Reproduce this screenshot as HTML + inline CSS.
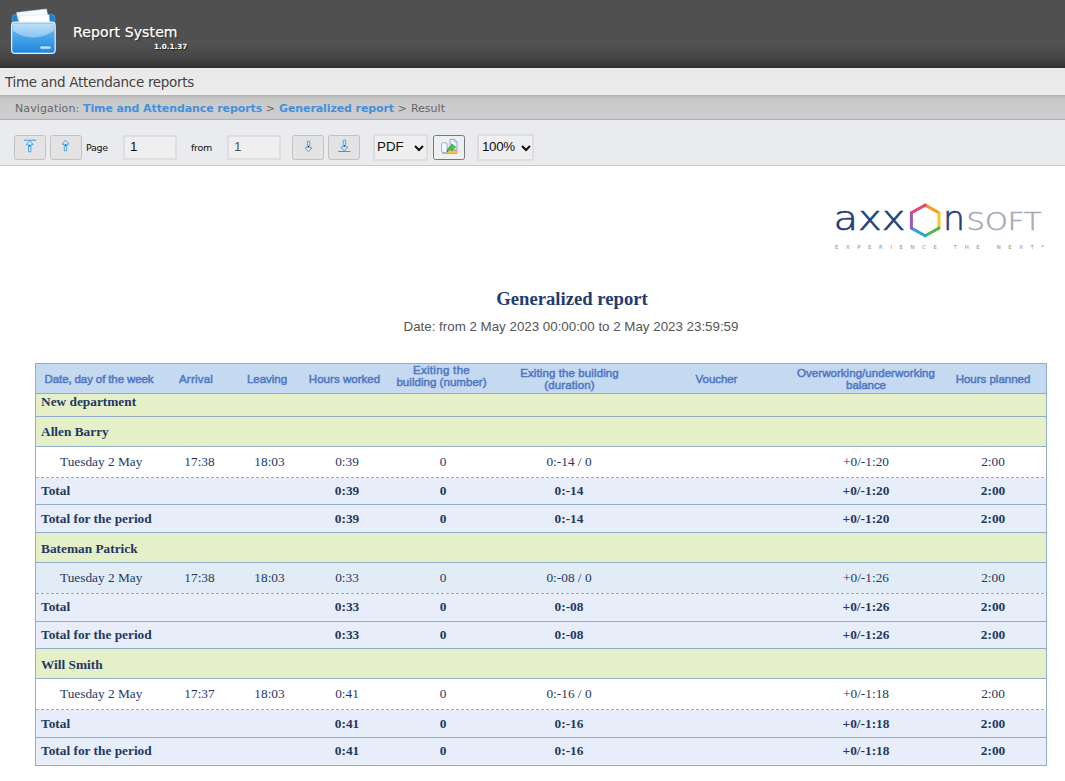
<!DOCTYPE html>
<html lang="en">
<head>
<meta charset="utf-8">
<title>Report System</title>
<style>
html,body{margin:0;padding:0;}
body{width:1065px;height:781px;overflow:hidden;background:#fff;position:relative;font-family:"Liberation Sans",sans-serif;}
.abs{position:absolute;}
#hdr{left:0;top:0;width:1065px;height:68px;background:linear-gradient(#505050 0%,#505050 57%,#525252 63%,#494949 80%,#3a3a3a 94%,#2d2d2d 100%);}
#apptitle{left:73px;top:24px;font-family:"DejaVu Sans","Liberation Sans",sans-serif;font-size:14px;color:#fff;white-space:nowrap;text-shadow:1px 1px 1px #222;letter-spacing:0.12px;-webkit-text-stroke:0.25px #fff;}
#appver{left:154px;top:42px;font-family:"DejaVu Sans","Liberation Sans",sans-serif;font-size:7.2px;font-weight:bold;color:#fff;white-space:nowrap;text-shadow:1px 1px 1px #222;}
#tbar{left:0;top:68px;width:1065px;height:27px;background:linear-gradient(#e8e8e8,#ededed);}
#ttext{left:5px;top:74px;font-family:"DejaVu Sans","Liberation Sans",sans-serif;font-size:13.5px;color:#444;white-space:nowrap;letter-spacing:-0.3px;}
#nav{left:0;top:95px;width:1065px;height:25px;background:linear-gradient(#b2b2b2 0%,#c3c3c3 10%,#cacaca 30%,#cecece 93%,#a6a6a6 100%);}
#navtext{left:15px;top:102px;font-family:"DejaVu Sans","Liberation Sans",sans-serif;font-size:11px;color:#666;white-space:nowrap;}
#navtext b{color:#4490dc;letter-spacing:-0.1px;}
#navtext i{font-style:normal;letter-spacing:0.25px;}
#tool{left:0;top:120px;width:1065px;height:45px;background:#e9ebee;border-bottom:1px solid #c9c9c9;}
.btn{position:absolute;top:135px;height:25px;width:32px;box-sizing:border-box;border:1px solid #c2c2c2;border-radius:2.5px;background:#e3e3e3;}
.inp{position:absolute;top:135px;height:25px;width:54px;box-sizing:border-box;border:2px solid #dedede;background:#efefef;font-size:13.33px;line-height:20px;padding-left:5px;color:#111;}
.sel{position:absolute;top:134px;height:27px;box-sizing:border-box;border:2px solid #dedede;background:#efefef;font-size:13.33px;line-height:21px;padding-left:2px;color:#111;}
.chev{position:absolute;right:2px;top:9px;}
.lbl{position:absolute;font-family:"DejaVu Sans","Liberation Sans",sans-serif;font-size:9.5px;color:#111;top:142px;white-space:nowrap;letter-spacing:-0.3px;}

#rtitle{left:372px;top:288px;width:400px;text-align:center;font-family:"Liberation Serif",serif;font-weight:bold;font-size:18.67px;color:#1f3d73;white-space:nowrap;}
#rdate{left:321px;top:319px;width:500px;text-align:center;font-family:"Liberation Sans",sans-serif;font-size:13.33px;color:#555;white-space:nowrap;}
#tbl{left:35px;top:363px;width:1010px;height:401px;border:1px solid #90aeca;background:#fff;overflow:hidden;}
.row{position:absolute;left:0;width:1010px;}
.head{background:#c5d9f1;}
.dept,.emp{background:#e6f0c8;}
.data{background:#fff;}
.datab{background:#e2ecf6;}
.tot{background:#e8eef9;}
.ln{position:absolute;left:0;width:1010px;height:0;border-top:1px solid #90aeca;}
.ln.dash{border-top:0;height:1px;background:repeating-linear-gradient(90deg,#98a9be 0,#98a9be 3px,transparent 3px,transparent 5px);}
.th{position:absolute;width:200px;text-align:center;font-family:"Liberation Sans",sans-serif;font-size:11.5px;line-height:12.2px;color:#5078c4;white-space:nowrap;-webkit-text-stroke:0.5px #5078c4;}
.tl,.tc{position:absolute;font-family:"Liberation Serif",serif;font-size:13.33px;line-height:20px;height:20px;color:#1f3864;white-space:nowrap;}
.tc{width:120px;text-align:center;}
.b{font-weight:bold;}
</style>
</head>
<body>
<div id="hdr" class="abs"></div>
<svg id="folder" class="abs" style="left:8px;top:6px" width="52" height="52" viewBox="8 6 52 52">
<defs>
<linearGradient id="fg" x1="0" y1="0" x2="0" y2="1"><stop offset="0" stop-color="#8cc6f2"/><stop offset="0.45" stop-color="#4aa6ea"/><stop offset="1" stop-color="#1f86dc"/></linearGradient>
<linearGradient id="gl" x1="0" y1="0" x2="0" y2="1"><stop offset="0" stop-color="#cfe7fa"/><stop offset="1" stop-color="#9fd0f5"/></linearGradient>
<linearGradient id="pp" x1="0" y1="0" x2="0" y2="1"><stop offset="0" stop-color="#ffffff"/><stop offset="1" stop-color="#e4eef6"/></linearGradient>
</defs>
<rect x="12.2" y="14.6" width="42.6" height="12" rx="3" fill="#1d7fcf" stroke="#4aa3e6" stroke-width="0.8"/>
<polygon points="16.5,12.5 46.5,9 48.5,20 18.5,21" fill="url(#pp)" stroke="#d5e3ee" stroke-width="0.5"/>
<polygon points="19,15.5 49,15 49.5,22 19.5,22" fill="#ffffff" stroke="#dbe7f0" stroke-width="0.5"/>
<rect x="11.6" y="22.2" width="43.6" height="31.2" rx="3.5" fill="url(#fg)" stroke="#e6f3fd" stroke-width="1.2"/>
<path d="M13,24.7 Q13,23.7 14,23.7 L52.8,23.7 Q53.8,23.7 53.8,24.7 L53.8,31 Q33.5,44 13,31 Z" fill="url(#gl)" opacity="0.75"/>
<rect x="40" y="46" width="11" height="3.2" rx="1.2" fill="#bfe0f8" stroke="#1a74c4" stroke-width="0.5"/>
</svg>
<div id="apptitle" class="abs">Report System</div>
<div id="appver" class="abs">1.0.1.37</div>
<div id="tbar" class="abs"></div>
<div id="ttext" class="abs">Time and Attendance reports</div>
<div id="nav" class="abs"></div>
<div id="navtext" class="abs"><span style="letter-spacing:0.12px">Navigation: </span><b id="l1">Time and Attendance reports</b><i> &gt; </i><b id="l2">Generalized report</b><i> &gt; </i><span id="l3">Result</span></div>
<div id="tool" class="abs"></div>
<div class="btn" style="left:14px"><svg width="32" height="25" viewBox="0 0 32 25" style="position:absolute;left:-1px;top:-1px"><line x1="10" y1="5.2" x2="22" y2="5.2" stroke="#3a9ce4" stroke-width="1"/><path d="M14.5,16.8 L16.9,16.8 L16.9,9.8 L19.2,9.5 L15.7,5.6000000000000005 L12.2,9.5 L14.5,9.8 Z" fill="#cdeaff" stroke="#3a9ce4" stroke-width="0.85" stroke-linejoin="miter"/><rect x="15.2" y="10.0" width="1" height="1.5" fill="#0a1a2a"/></svg></div>
<div class="btn" style="left:50px"><svg width="32" height="25" viewBox="0 0 32 25" style="position:absolute;left:-1px;top:-1px"><path d="M14.3,15.8 L16.7,15.8 L16.7,9.4 L19.0,9.1 L15.5,5.2 L12.0,9.1 L14.3,9.4 Z" fill="#cdeaff" stroke="#3a9ce4" stroke-width="0.85" stroke-linejoin="miter"/><rect x="15.0" y="9.6" width="1" height="1.5" fill="#0a1a2a"/></svg></div>
<div class="lbl" id="lpage" style="left:86px">Page</div>
<div class="inp" id="in1" style="left:123px">1</div>
<div class="lbl" id="lfrom" style="left:191px">from</div>
<div class="inp" id="in2" style="left:227px;color:#555">1</div>
<div class="btn" style="left:292px"><svg width="32" height="25" viewBox="0 0 32 25" style="position:absolute;left:-1px;top:-1px"><path d="M15.3,6.3 L17.7,6.3 L17.7,12.499999999999998 L20.0,12.799999999999999 L16.5,16.7 L13.0,12.799999999999999 L15.3,12.499999999999998 Z" fill="#cdeaff" stroke="#3a9ce4" stroke-width="0.85" stroke-linejoin="miter"/><rect x="16.0" y="10.799999999999999" width="1" height="1.5" fill="#0a1a2a"/></svg></div>
<div class="btn" style="left:328px"><svg width="32" height="25" viewBox="0 0 32 25" style="position:absolute;left:-1px;top:-1px"><line x1="10" y1="16.5" x2="22.3" y2="16.5" stroke="#3a9ce4" stroke-width="1"/><path d="M15.2,5.2 L17.599999999999998,5.2 L17.599999999999998,11.799999999999999 L19.9,12.1 L16.4,16.0 L12.899999999999999,12.1 L15.2,11.799999999999999 Z" fill="#cdeaff" stroke="#3a9ce4" stroke-width="0.85" stroke-linejoin="miter"/><rect x="15.899999999999999" y="10.1" width="1" height="1.5" fill="#0a1a2a"/></svg></div>
<div class="sel" id="s1" style="left:373px;width:55px">PDF<svg class="chev" width="10" height="7" viewBox="0 0 10 7"><path d="M1,1 L5,5 L9,1" fill="none" stroke="#111" stroke-width="2"/></svg></div>
<div class="btn" style="left:433px;border-color:#777;background:#efefef"><svg width="32" height="25" viewBox="0 0 32 25" style="position:absolute;left:-1px;top:-1px"><g>
<path d="M9.6,15.2 h14.2 v3.2 h-14.2 z" fill="#f3c94b" stroke="#c8921c" stroke-width="0.7"/>
<path d="M17,4.4 h4.6 l2.4,2.4 v8.2 h-7 z" fill="#eef5fc" stroke="#6f9ad0" stroke-width="0.8"/>
<path d="M21.4,4.6 v2.4 h2.4" fill="none" stroke="#6f9ad0" stroke-width="0.6"/>
<rect x="8.6" y="7.8" width="5.4" height="9.6" rx="1" fill="#f4f9fe" stroke="#7f9fc6" stroke-width="0.8"/>
<path d="M14.2,17.2 C14.4,13.4 16.2,11.4 18.6,11.1 L18.6,8.8 L22.6,12.2 L18.6,15.6 L18.6,13.6 C16.8,13.8 15.4,15 14.2,17.2 Z" fill="#52c83f" stroke="#1e8f22" stroke-width="0.7"/>
</g></svg></div>
<div class="sel" id="s2" style="left:477px;width:57px;letter-spacing:-0.3px;padding-left:3px">100%<svg class="chev" style="right:1px" width="10" height="7" viewBox="0 0 10 7"><path d="M1,1 L5,5 L9,1" fill="none" stroke="#111" stroke-width="2"/></svg></div>
<svg id="logo" class="abs" style="left:825px;top:195px" width="230" height="65" viewBox="825 195 230 65">
<g font-family="'DejaVu Sans','Liberation Sans',sans-serif" font-weight="200">
<text x="833.5" y="229.5" font-size="34" fill="#1e3f78" stroke="#1e3f78" stroke-width="0.65" textLength="72" lengthAdjust="spacingAndGlyphs">axx</text>
<text x="943" y="229.5" font-size="34" fill="#1e3f78" stroke="#1e3f78" stroke-width="0.65" textLength="22" lengthAdjust="spacingAndGlyphs">n</text>
<text x="966.5" y="229.5" font-size="25.4" fill="#a6aab8" stroke="#a6aab8" stroke-width="0.6" textLength="75" lengthAdjust="spacingAndGlyphs">SOFT</text>
<text x="835" y="248.7" font-size="5.4" fill="#8c8c8c" font-weight="400" textLength="209" lengthAdjust="spacing">EXPERIENCE  THE  NEXT*</text>
</g>
<line x1="925.2" y1="205.1" x2="939.0" y2="212.8" stroke="#f39a1e" stroke-width="3" stroke-linecap="round"/><line x1="939.0" y1="212.8" x2="939.0" y2="228.1" stroke="#f6c433" stroke-width="3" stroke-linecap="round"/><line x1="939.0" y1="228.1" x2="925.2" y2="235.7" stroke="#55b848" stroke-width="3" stroke-linecap="round"/><line x1="925.2" y1="235.7" x2="911.4" y2="228.1" stroke="#2aa3de" stroke-width="3" stroke-linecap="round"/><line x1="911.4" y1="228.1" x2="911.4" y2="212.8" stroke="#9a5bb7" stroke-width="3" stroke-linecap="round"/><line x1="911.4" y1="212.8" x2="925.2" y2="205.1" stroke="#e4457a" stroke-width="3" stroke-linecap="round"/>
</svg>
<div id="rtitle" class="abs">Generalized report</div>
<div id="rdate" class="abs">Date: from 2 May 2023 00:00:00 to 2 May 2023 23:59:59</div>
<!--TBL-->
<div id="tbl" class="abs">
<div class="row head" style="top:0px;height:29px"></div>
<div class="row dept" style="top:30px;height:22px"></div>
<div class="row emp" style="top:53px;height:29px"></div>
<div class="row data" style="top:83px;height:30px"></div>
<div class="row tot" style="top:114px;height:26px"></div>
<div class="row tot" style="top:141px;height:27px"></div>
<div class="row emp" style="top:169px;height:29px"></div>
<div class="row datab" style="top:199px;height:30px"></div>
<div class="row tot" style="top:230px;height:27px"></div>
<div class="row tot" style="top:258px;height:26px"></div>
<div class="row emp" style="top:285px;height:29px"></div>
<div class="row data" style="top:315px;height:30px"></div>
<div class="row tot" style="top:346px;height:27px"></div>
<div class="row tot" style="top:374px;height:27px"></div>
<div class="ln" style="top:29px"></div>
<div class="ln" style="top:52px"></div>
<div class="ln" style="top:82px"></div>
<div class="ln dash" style="top:113px"></div>
<div class="ln" style="top:140px"></div>
<div class="ln" style="top:168px"></div>
<div class="ln" style="top:198px"></div>
<div class="ln dash" style="top:229px"></div>
<div class="ln" style="top:257px"></div>
<div class="ln" style="top:284px"></div>
<div class="ln" style="top:314px"></div>
<div class="ln dash" style="top:345px"></div>
<div class="ln" style="top:373px"></div>
</div>
<div class="th" style="left:-1px;top:372.5px"><span class="hs" style="letter-spacing:-0.116px">Date, day of the week</span></div>
<div class="th" style="left:96px;top:372.5px"><span class="hs" style="letter-spacing:0.215px">Arrival</span></div>
<div class="th" style="left:167px;top:372.5px"><span class="hs" style="letter-spacing:-0.014px">Leaving</span></div>
<div class="th" style="left:244.5px;top:372.5px"><span class="hs" style="letter-spacing:0.029px">Hours worked</span></div>
<div class="th" style="left:341.5px;top:363.6px"><span class="hs" style="letter-spacing:0.309px">Exiting the</span><br><span class="hs" style="letter-spacing:0.041px">building (number)</span></div>
<div class="th" style="left:469.5px;top:366.9px"><span class="hs" style="letter-spacing:0.103px">Exiting the building</span><br><span class="hs" style="letter-spacing:0.108px">(duration)</span></div>
<div class="th" style="left:616.5px;top:372.5px"><span class="hs" style="letter-spacing:-0.058px">Voucher</span></div>
<div class="th" style="left:766px;top:366.9px"><span class="hs" style="letter-spacing:0.046px">Overworking/underworking</span><br><span class="hs" style="letter-spacing:-0.071px">balance</span></div>
<div class="th" style="left:893px;top:372.5px"><span class="hs" style="letter-spacing:-0.016px">Hours planned</span></div>
<div class="tl b" style="left:41px;top:392px">New department</div>
<div class="tl b" style="left:41px;top:422px">Allen Barry</div>
<div class="tl n" style="left:60px;top:452px">Tuesday 2 May</div>
<div class="tc n" style="left:139.5px;top:452px">17:38</div>
<div class="tc n" style="left:209.5px;top:452px">18:03</div>
<div class="tc n" style="left:287px;top:452px">0:39</div>
<div class="tc n" style="left:383px;top:452px">0</div>
<div class="tc n" style="left:509px;top:452px">0:-14 / 0</div>
<div class="tc n" style="left:806px;top:452px">+0/-1:20</div>
<div class="tc n" style="left:933px;top:452px">2:00</div>
<div class="tl b" style="left:41px;top:481px">Total</div>
<div class="tc b" style="left:287px;top:481px">0:39</div>
<div class="tc b" style="left:383px;top:481px">0</div>
<div class="tc b" style="left:509px;top:481px">0:-14</div>
<div class="tc b" style="left:806px;top:481px">+0/-1:20</div>
<div class="tc b" style="left:933px;top:481px">2:00</div>
<div class="tl b" style="left:41px;top:509px">Total for the period</div>
<div class="tc b" style="left:287px;top:509px">0:39</div>
<div class="tc b" style="left:383px;top:509px">0</div>
<div class="tc b" style="left:509px;top:509px">0:-14</div>
<div class="tc b" style="left:806px;top:509px">+0/-1:20</div>
<div class="tc b" style="left:933px;top:509px">2:00</div>
<div class="tl b" style="left:41px;top:539px">Bateman Patrick</div>
<div class="tl n" style="left:60px;top:568px">Tuesday 2 May</div>
<div class="tc n" style="left:139.5px;top:568px">17:38</div>
<div class="tc n" style="left:209.5px;top:568px">18:03</div>
<div class="tc n" style="left:287px;top:568px">0:33</div>
<div class="tc n" style="left:383px;top:568px">0</div>
<div class="tc n" style="left:509px;top:568px">0:-08 / 0</div>
<div class="tc n" style="left:806px;top:568px">+0/-1:26</div>
<div class="tc n" style="left:933px;top:568px">2:00</div>
<div class="tl b" style="left:41px;top:597px">Total</div>
<div class="tc b" style="left:287px;top:597px">0:33</div>
<div class="tc b" style="left:383px;top:597px">0</div>
<div class="tc b" style="left:509px;top:597px">0:-08</div>
<div class="tc b" style="left:806px;top:597px">+0/-1:26</div>
<div class="tc b" style="left:933px;top:597px">2:00</div>
<div class="tl b" style="left:41px;top:625px">Total for the period</div>
<div class="tc b" style="left:287px;top:625px">0:33</div>
<div class="tc b" style="left:383px;top:625px">0</div>
<div class="tc b" style="left:509px;top:625px">0:-08</div>
<div class="tc b" style="left:806px;top:625px">+0/-1:26</div>
<div class="tc b" style="left:933px;top:625px">2:00</div>
<div class="tl b" style="left:41px;top:655px">Will Smith</div>
<div class="tl n" style="left:60px;top:684px">Tuesday 2 May</div>
<div class="tc n" style="left:139.5px;top:684px">17:37</div>
<div class="tc n" style="left:209.5px;top:684px">18:03</div>
<div class="tc n" style="left:287px;top:684px">0:41</div>
<div class="tc n" style="left:383px;top:684px">0</div>
<div class="tc n" style="left:509px;top:684px">0:-16 / 0</div>
<div class="tc n" style="left:806px;top:684px">+0/-1:18</div>
<div class="tc n" style="left:933px;top:684px">2:00</div>
<div class="tl b" style="left:41px;top:714px">Total</div>
<div class="tc b" style="left:287px;top:714px">0:41</div>
<div class="tc b" style="left:383px;top:714px">0</div>
<div class="tc b" style="left:509px;top:714px">0:-16</div>
<div class="tc b" style="left:806px;top:714px">+0/-1:18</div>
<div class="tc b" style="left:933px;top:714px">2:00</div>
<div class="tl b" style="left:41px;top:741px">Total for the period</div>
<div class="tc b" style="left:287px;top:741px">0:41</div>
<div class="tc b" style="left:383px;top:741px">0</div>
<div class="tc b" style="left:509px;top:741px">0:-16</div>
<div class="tc b" style="left:806px;top:741px">+0/-1:18</div>
<div class="tc b" style="left:933px;top:741px">2:00</div>
<!--/TBL-->
</body>
</html>
